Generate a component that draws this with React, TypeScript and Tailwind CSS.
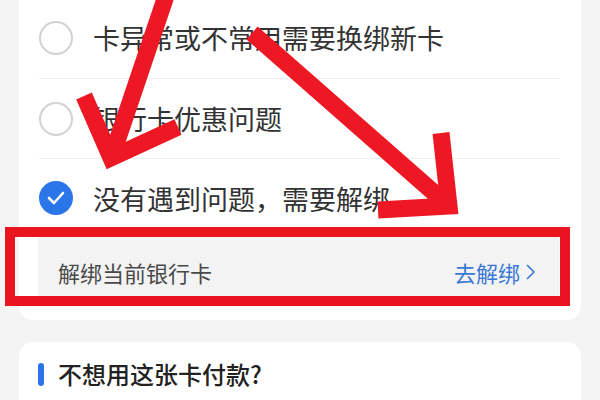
import React from "react";

function Radio({ checked }: { checked?: boolean }) {
  if (checked) {
    return (
      <div className="w-[34px] h-[34px] rounded-full bg-[#2a76e8] flex items-center justify-center shrink-0">
        <svg width="20" height="16" viewBox="0 0 20 16">
          <polyline points="3,8 8,13 17,3" fill="none" stroke="#fff" strokeWidth="2.6" strokeLinecap="round" strokeLinejoin="round" />
        </svg>
      </div>
    );
  }
  return <div className="w-[34px] h-[34px] rounded-full border-2 border-[#d2d2d2] shrink-0" />;
}

function Row({ text, checked, border, h }: { text: string; checked?: boolean; border?: boolean; h: string }) {
  return (
    <div className={`flex items-center ${h} ${border ? "border-b border-[#ededed]" : ""}`}>
      <Radio checked={checked} />
      <span className="ml-[20px] text-[27px] leading-none text-[#333333]">{text}</span>
    </div>
  );
}

export default function App() {
  return (
    <div className="relative w-[600px] h-[400px] overflow-hidden bg-[#f4f4f4] font-['Noto_Sans_CJK_SC','Noto_Sans',sans-serif]">
      <div className="mx-[19px] -mt-[3px] bg-white rounded-b-[14px] pl-[20px] pr-[22px] pb-[14px]">
        <Row text="卡异常或不常用需要换绑新卡" border h="h-[82px]" />
        <Row text="银行卡优惠问题" border h="h-[80px]" />
        <Row text="没有遇到问题，需要解绑" checked h="h-[78px]" />
        <div className="h-[69px] bg-[#f3f3f3] -ml-px pl-[20px] pr-[22px] flex items-center justify-between">
          <span className="text-[22px] leading-none text-[#4a4a4a]">解绑当前银行卡</span>
          <span className="flex items-center text-[22px] leading-none text-[#3a78d6]">
            去解绑
            <svg width="12" height="18" viewBox="0 0 12 18" className="ml-[5px]">
              <polyline points="2,2 9,9 2,16" fill="none" stroke="#3a78d6" strokeWidth="1.6" />
            </svg>
          </span>
        </div>
      </div>
      <div className="mx-[19px] mt-[22px] bg-white rounded-t-[14px] pl-[19px] pt-[19px] h-[80px]">
        <div className="flex items-center h-[26px]">
          <div className="w-[6px] h-[23px] rounded-full bg-[#2a76e8]" />
          <span className="ml-[14px] text-[24px] leading-none font-medium text-[#222222]">不想用这张卡付款?</span>
        </div>
      </div>

      <div className="absolute left-[5px] top-[227px] w-[565px] h-[79px] border-[10px] border-[#ea1420] pointer-events-none" />

      <svg className="absolute inset-0 pointer-events-none" width="600" height="400" viewBox="0 0 600 400">
        <g stroke="#ee1824" strokeWidth="17" fill="none" strokeLinejoin="miter" strokeLinecap="butt">
          <line x1="168" y1="-10" x2="114" y2="150" />
          <polyline points="84,96 111,158 178,127" />
          <line x1="252" y1="33" x2="440" y2="198" />
          <polyline points="441,133 449,206 378,210" />
        </g>
      </svg>
    </div>
  );
}
